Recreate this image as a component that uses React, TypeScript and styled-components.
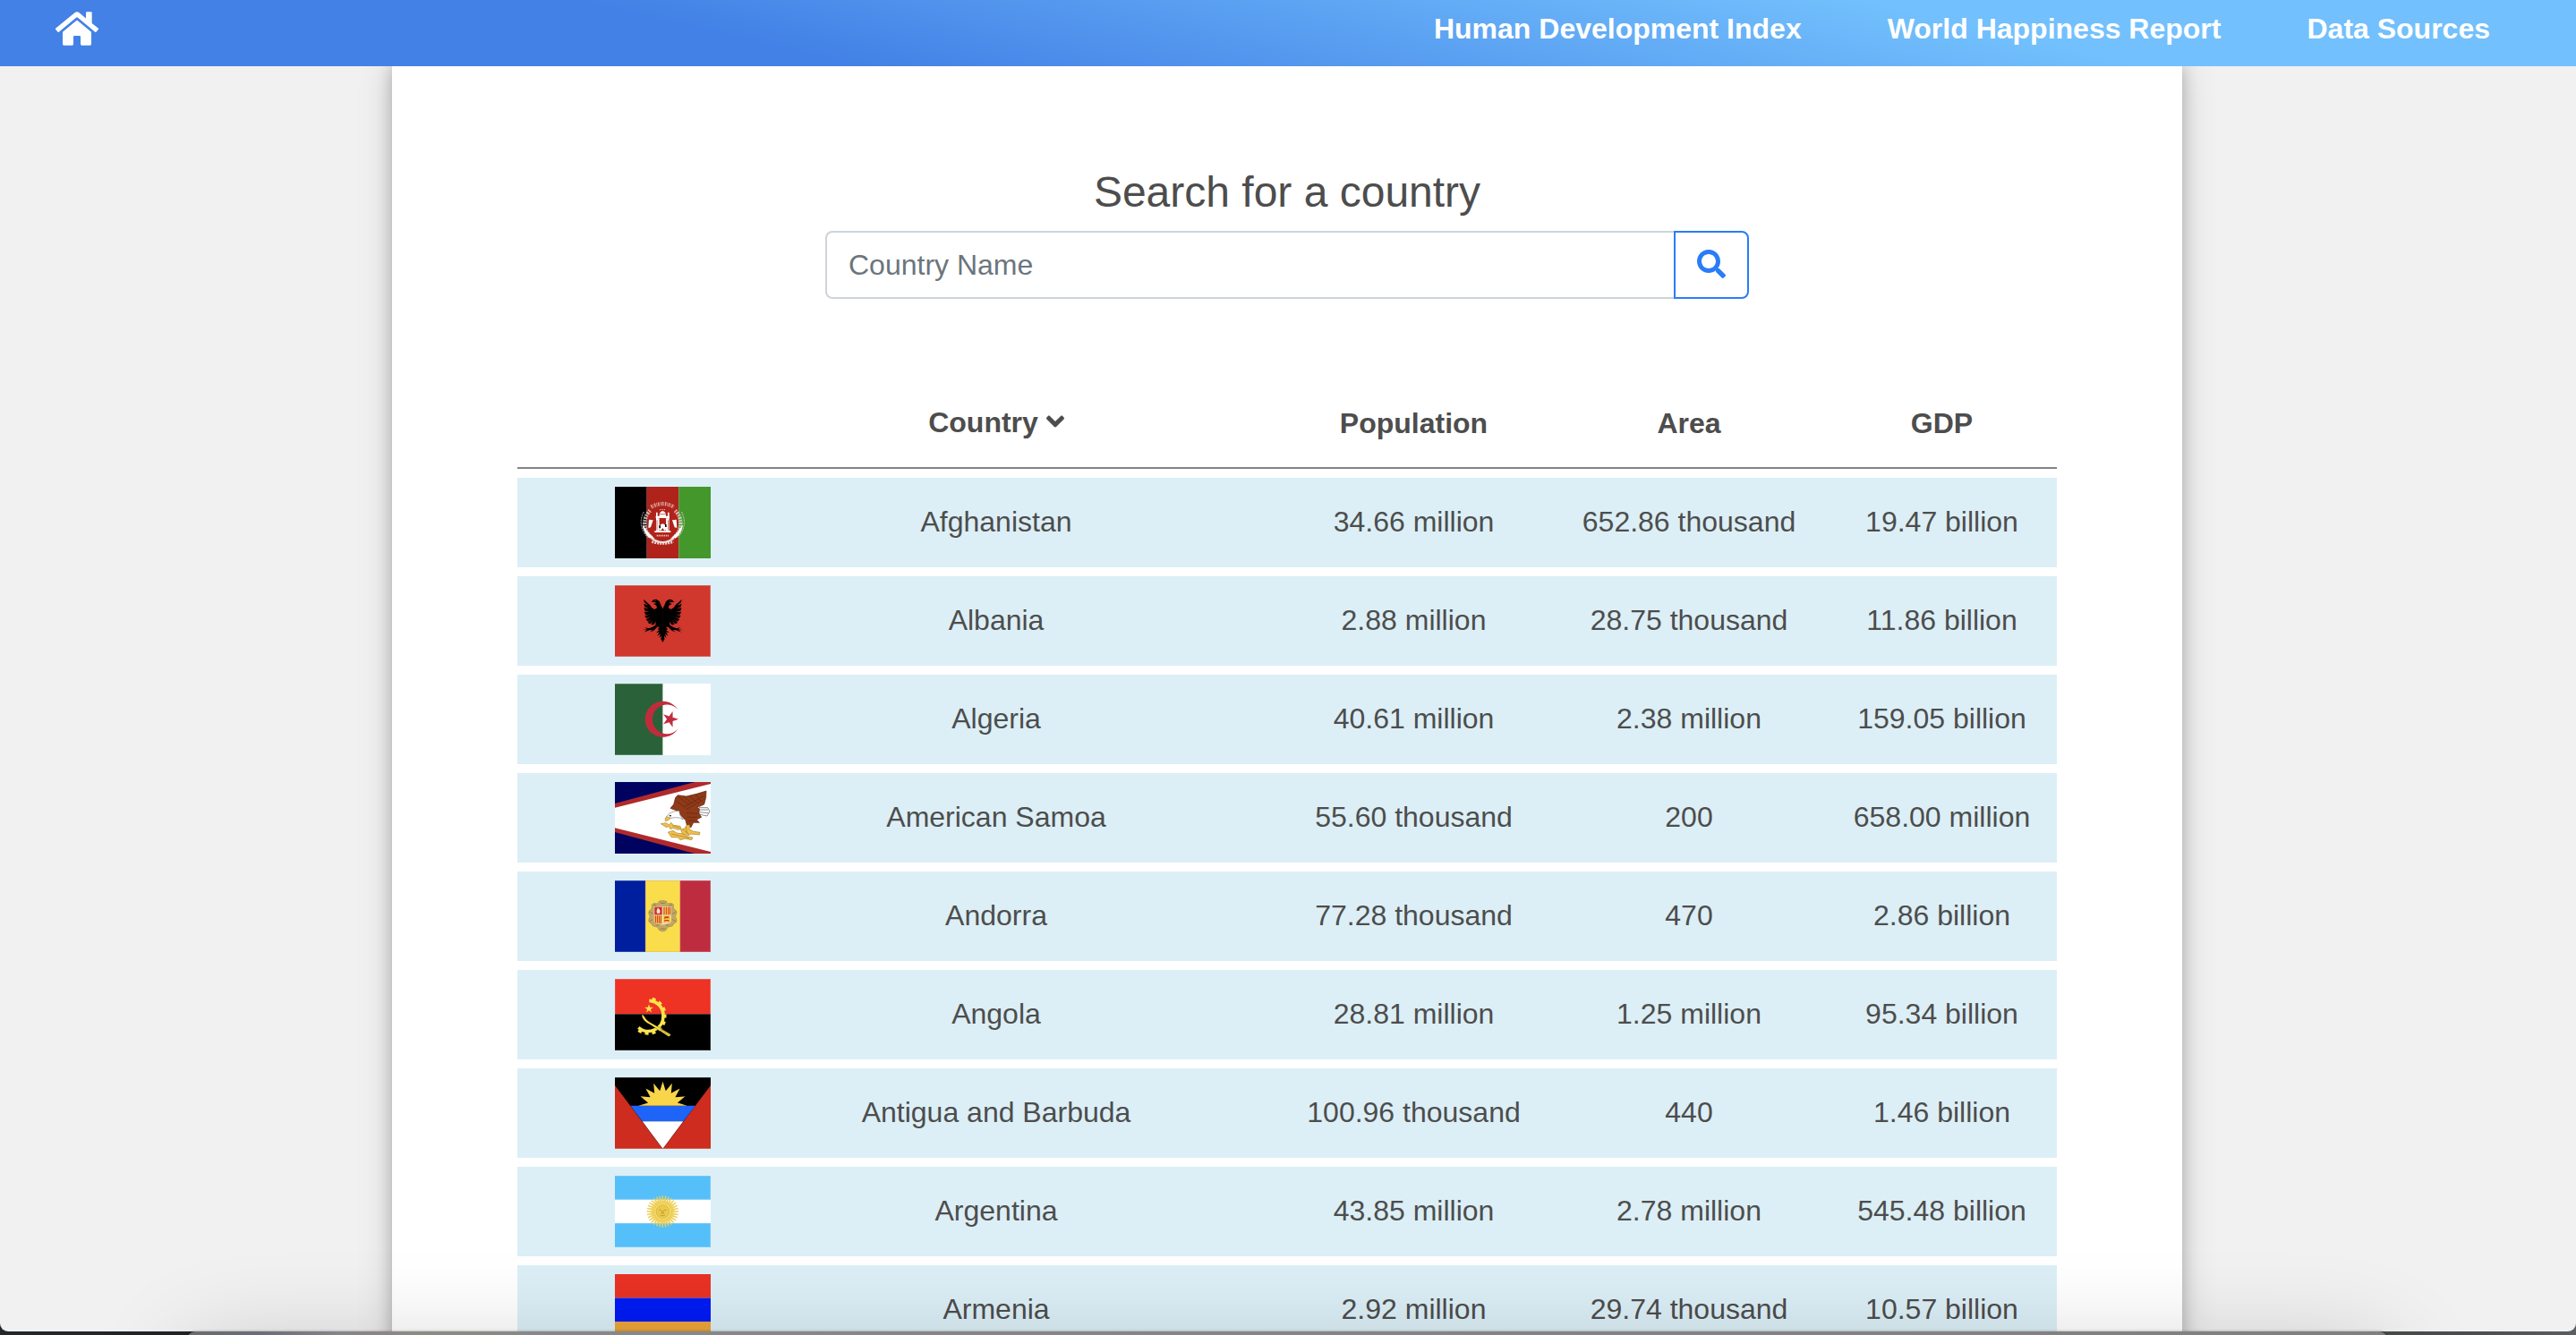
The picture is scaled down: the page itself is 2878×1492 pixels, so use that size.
import React from 'react';
import styled, { createGlobalStyle } from 'styled-components';
import { FaAngleDown, FaHome, FaSearch } from 'react-icons/fa';

const GlobalStyle = createGlobalStyle`
  *, *::before, *::after { box-sizing: border-box; }
  body {
    margin: 0;
    font-family: "Liberation Sans", Helvetica, Arial, sans-serif;
    font-size: 32px;
    line-height: 48px;
    color: #4d4d4d;
    overflow: hidden;
  }
`;

const Desktop = styled.div`
  position: relative;
  height: 1492px;
  overflow: hidden;
  background: linear-gradient(90deg, #24282c 0%, #1f2326 10%, #303336 50%, #4b4e50 96%, #5c5f61 100%);
`;

const BrowserPage = styled.div`
  display: flex;
  flex-direction: column;
  height: 1488px;
  overflow: hidden;
  border-radius: 0 0 9px 9px;
  background: #f1f1f1;
`;

const WindowBehind = styled.div`
  position: absolute;
  left: 209px;
  right: 211px;
  top: 1488px;
  height: 300px;
  border-radius: 9px 9px 0 0;
  background: linear-gradient(90deg, #6a6c6e 0, #6b6e78 80px, #85858a 170px, #8d8588 215px, #8b8d84 260px, #888 400px, #808080 100%);
  box-shadow: 0 0 3px rgba(0, 0, 0, 0.35), 0 20px 110px rgba(0, 0, 0, 0.19);
`;

const NavBar = styled.nav`
  position: relative;
  z-index: 1;
  flex: none;
  display: flex;
  align-items: center;
  justify-content: space-between;
  height: 74px;
  padding: 0 96px 10px 62px;
  color: #fff;
  background: linear-gradient(13deg, #4381e6 30%, #72c0fd 75%);
`;

const HomeLink = styled.a`
  display: flex;
  font-size: 48px;
`;

const NavLinks = styled.div`
  display: flex;
  gap: 96px;
`;

const NavLink = styled.a`
  font-weight: 700;
`;

const Panel = styled.main`
  flex: 1 0 auto;
  width: 2000px;
  margin: 0 440px 0 438px;
  padding: 110px 140px 0;
  background: #fff;
  box-shadow: 0 0 16px rgba(0, 0, 0, 0.22), 0 0 38px rgba(0, 0, 0, 0.16);
`;

const SearchForm = styled.div`
  width: 1032px;
  margin: 0 auto 88px;
`;

const SearchTitle = styled.h4`
  margin: 0 0 14px;
  padding-top: 2px;
  font-size: 48px;
  line-height: 58px;
  font-weight: 400;
  text-align: center;
`;

const InputGroup = styled.div`
  display: flex;
  height: 76px;
`;

const SearchInput = styled.input`
  flex: 1;
  min-width: 0;
  padding: 0 24px;
  border: 2px solid #ced4da;
  border-right: 0;
  border-radius: 8px 0 0 8px;
  background: #fff;
  font: inherit;
  color: inherit;
  &::placeholder {
    color: #6c757d;
    opacity: 1;
  }
`;

const SearchButton = styled.button`
  display: flex;
  align-items: center;
  justify-content: center;
  width: 84px;
  padding: 0 0 3px;
  border: 2px solid #2a7cf7;
  border-radius: 0 8px 8px 0;
  background: transparent;
  color: #2a7cf7;
  font-size: 32px;
`;

const Table = styled.div`
  display: flex;
  flex-direction: column;
  gap: 10px;
`;

const Row = styled.div<{ $head?: boolean }>`
  flex: none;
  display: grid;
  grid-template-columns: 222px 626px 307px 308px 257px;
  align-items: center;
  height: ${(p) => (p.$head ? 102 : 100)}px;
  padding-bottom: ${(p) => (p.$head ? 0 : 2)}px;
  font-weight: ${(p) => (p.$head ? 700 : 400)};
  border-bottom: ${(p) => (p.$head ? '2px solid #838383' : '0')};
  background: ${(p) => (p.$head ? 'transparent' : '#dceff6')};
`;

const Cell = styled.div`
  display: flex;
  align-items: center;
  justify-content: center;
  gap: 9px;
  white-space: nowrap;
`;

const HeadCell = styled(Cell)<{ $sorted?: boolean }>`
  padding-top: ${(p) => (p.$sorted ? 0 : 2)}px;
`;

const SortIcon = styled(FaAngleDown)`
  font-size: 32px;
  width: 20px;
  margin-bottom: 2px;
`;

const FlagCell = styled.div`
  display: flex;
  padding: 2px 0 0 109px;
`;

const FlagSvg = styled.svg`
  display: block;
  width: 107px;
  height: 80px;
`;

const polar = (cx: number, cy: number, r: number, degrees: number) => {
  const a = (degrees * Math.PI) / 180;
  return `${(cx + r * Math.cos(a)).toFixed(2)},${(cy + r * Math.sin(a)).toFixed(2)}`;
};

const starPoints = (cx: number, cy: number, r: number, turn: number, n = 5, inner = 0.382) =>
  Array.from({ length: n * 2 }, (_, i) => polar(cx, cy, i % 2 ? r * inner : r, turn + (i * 180) / n)).join(' ');

const rays = (cx: number, cy: number, from: number, to: number, n: number) =>
  Array.from({ length: n }, (_, i) => `M${polar(cx, cy, from, (i * 360) / n)}L${polar(cx, cy, to, (i * 360) / n)}`).join('');

const Flag = ({ children }: { children: React.ReactNode }) => (
  <FlagSvg viewBox="0 0 321 240" preserveAspectRatio="none">{children}</FlagSvg>
);

const Afghanistan = () => (
  <Flag>
    <rect width="107" height="240" fill="#000" />
    <rect x="107" width="107" height="240" fill="#b0231a" />
    <rect x="214" width="107" height="240" fill="#44972a" />
    <g fill="none" stroke="#efe3e1">
      <path d="M118 80A60 60 0 0 0 122 170M202 80A60 60 0 0 1 198 170" strokeWidth="13" strokeDasharray="5 3 7 3" opacity=".75" />
      <path d="M97 84A70 70 0 0 0 110 170M223 84A70 70 0 0 1 210 170" strokeWidth="3" strokeDasharray="6 3" opacity=".8" />
      <path d="M122 68Q160 46 198 68" strokeWidth="13" strokeDasharray="4 3 2 3" opacity=".75" />
      <path d="M150 77h20" strokeWidth="3" strokeDasharray="4 3" opacity=".8" />
      <path d="M122 172Q160 200 198 172" strokeWidth="6" />
      <path d="M124 184Q160 196 196 184" strokeWidth="9" strokeDasharray="6 3" opacity=".9" />
      <path d="M140 164h40" strokeWidth="5" strokeDasharray="4 2" opacity=".8" />
    </g>
    <g fill="#fff">
      <path d="M149 98Q148 84 160 81Q172 84 171 98H183V105H137V98Z" />
      <path d="M138 86h5v66h-5zM177 86h5v66h-5zM139 106h10v44h-10zM171 106h10v44h-10zM133 148h54v5h-54z" />
      <path d="M114 110l14 2-8 24-8 2zM206 110l-14 2 8 24 8 2z" />
      <path d="M149 144V132Q160 116 171 132V144L166 148 160 138 154 148Z" />
      <path d="M92 128Q104 140 112 154L134 174 114 170Q96 154 92 128ZM228 128Q216 140 208 154L186 174 206 170Q224 154 228 128Z" />
    </g>
    <path d="M148 130h5v9h-5zM168 126h5v9h-5z" fill="#000" />
    <path d="M148 114h24M150 92h20M141 112v34M179 112v34" stroke="#b0231a" strokeWidth="2" />
  </Flag>
);

const EagleHalf = () => (
  <path d="M212 452 206 440 200 426 190 419 180 421 173 429 184 429 191 432 180 434 190 440 192 448 184 453 175 448 168 438 160 431 147 419 150 430 164 440 148 434 151 445 165 451 148 448 152 458 167 461 149 461 154 471 169 470 151 474 156 483 171 478 155 487 162 494 174 485 161 498 170 502 179 490 172 504 181 505 188 494 187 506 174 514 164 517 151 513 160 520 144 522 158 523 149 530 166 523 178 522 167 530 181 524 193 512 201 512 194 520 200 522 189 532 200 529 193 542 204 535 199 548 207 542 205 553 212 564Z" />
);

const Albania = () => (
  <Flag>
    <rect width="321" height="240" fill="#d0372d" />
    <path d="M0 1H320V239H0" fill="none" stroke="#e08e8a" strokeWidth="2" />
    <g transform="translate(-51 -372)">
      <EagleHalf />
      <g transform="translate(422.5 0) scale(-1 1)">
        <EagleHalf />
      </g>
      <path d="M183 424h5M234 424h5" stroke="#d0372d" strokeWidth="2" />
    </g>
  </Flag>
);

const Algeria = () => (
  <Flag>
    <rect width="160" height="240" fill="#2a6138" />
    <rect x="160" width="161" height="240" fill="#fff" />
    <path d="M0 1H160V239H0" fill="none" stroke="#7d9f88" strokeWidth="2" />
    <path d="M212 88A60 60 0 1 0 212 151A49 49 0 1 1 212 88Z" fill="#c12c3d" />
    <polygon points={starPoints(185, 119.5, 28, 0)} fill="#c12c3d" />
  </Flag>
);

const AmericanSamoa = () => (
  <Flag>
    <rect width="321" height="240" fill="#00025f" />
    <path d="M0 72 268 0H321V240H268L0 168Z" fill="#b02a2c" />
    <path d="M0 86 321 6V234L0 154Z" fill="#fff" />
    <g transform="translate(-51 -372)" strokeLinejoin="round">
      <path d="M333 458 362 458 369 470 360 486 333 480Z" fill="#fff" stroke="#555" strokeWidth="2" />
      <path d="M334 465 364 465M334 473 364 476" stroke="#555" strokeWidth="2" />
      <path
        d="M237 460 248 447 254 424 262 416 290 420 324 412 357 402 356 424 350 447 327 457 334 463 332 476 341 490 325 498 334 508 314 508 306 524 292 516 288 500 272 484 262 470 253 466Z"
        fill="#8f3a18"
        stroke="#54210e"
        strokeWidth="2"
      />
      <path
        d="M262 420 300 448M280 422 312 444M300 418 326 441M322 414 338 434M256 436 286 456M284 455 350 418M290 464 346 432M290 476 330 478M292 490 326 490M296 502 318 500"
        stroke="#54210e"
        strokeWidth="1.5"
        fill="none"
      />
      <path d="M266 468 247 471 234 477 224 488 224 495 238 493 254 491 268 492 280 498 270 484Z" fill="#fff" stroke="#555" strokeWidth="1.5" />
      <path d="M233 483h7v4h-7z" fill="#333" />
      <g fill="#f2bf49" stroke="#8d6a1d" strokeWidth="1.5">
        <path d="M224 488 219 495 221 503 230 500 238 493Z" />
        <path d="M205 512 221 509 233 515 240 508 247 517 270 520 274 530 262 532 246 526 237 530 231 520 224 524Z" />
        <path d="M292 516 302 516 300 530 313 537 336 541 334 549 306 546 296 552 278 546 272 533 286 526Z" />
        <path d="M229 540 246 535 258 543 276 545 290 554 312 558 308 566 286 562 270 566 262 558 240 557Z" />
      </g>
      <path d="M240 546 300 560M278 530 300 548M244 518 268 526M290 520 292 545" stroke="#8d6a1d" strokeWidth="1.5" />
    </g>
  </Flag>
);

const Andorra = () => (
  <Flag>
    <rect width="103" height="240" fill="#001f9f" />
    <rect x="103" width="115" height="240" fill="#f9dd4b" />
    <rect x="218" width="103" height="240" fill="#be2d3f" />
    <path d="M0 1H103M0 239H103" stroke="#596cb9" strokeWidth="2" />
    <path d="M103 1H218V239H103Z" fill="none" stroke="#eeb45a" strokeWidth="2" />
    <path d="M219 1H320V239H219" fill="none" stroke="#d56f7b" strokeWidth="2" />
    <g transform="translate(-51 -42)">
      <path
        d="M198 112Q211 107 224 112Q224 122 234 119Q246 117 248 125Q244 132 250 139Q262 144 257 154Q250 162 257 172Q262 182 249 186Q246 197 233 197Q224 196 224 207Q211 218 198 207Q198 196 188 197Q176 197 174 187Q161 182 165 172Q172 162 165 154Q161 144 173 139Q178 132 174 125Q178 117 190 119Q198 122 198 112Z"
        fill="#c2a767"
        stroke="#9c874f"
        strokeWidth="2"
      />
      <path d="M204 118h15M180 122l10 6M242 122l-10 6M169 148l9 6M253 148l-9 6M169 178l9-5M253 178l-9-5M190 193l12-4M232 193l-12-4M204 204h15" stroke="#8f7c48" strokeWidth="3" />
      <path d="M182 129H240V177Q240 188 211 191Q182 188 182 177Z" fill="#ead9a7" />
      <path d="M184 131h25v26h-25z" fill="#d02a32" />
      <path d="M213 131h25v26h-25zM213 160h25v24h-25zM184 160h25v25h-25z" fill="#f6d147" />
      <path d="M216 131v26M223 131v26M230 131v26M236 131v26M187 160v24M193 160v25M199 160v26M205 160v27" stroke="#cf2c2b" strokeWidth="3" />
      <path d="M192 152Q189 142 195 134Q205 140 201 152Z" fill="#fff" />
      <path d="M195 138v13" stroke="#f6d147" strokeWidth="3" />
      <path d="M217 163h15v6h-12v3h-3zM217 174h15v7h-3v-3h-9v3h-3z" fill="#cf3a25" />
    </g>
  </Flag>
);

const Angola = () => (
  <Flag>
    <rect width="321" height="118" fill="#ee3224" />
    <rect y="118" width="321" height="122" fill="#000" />
    <path d="M0 118V1H320V118" fill="none" stroke="#ee7c75" strokeWidth="2" />
    <path d="M0 239H320V118" fill="none" stroke="#555" strokeWidth="2" />
    <g transform="translate(-51 -372)">
      <g fill="none" stroke="#fbe44b">
        <path d="M166 445A49 49 0 0 1 213 496A50 50 0 0 1 130 535" strokeWidth="11" />
        <path d="M176 439A55 55 0 0 1 219 496A56 56 0 0 1 129 544" strokeWidth="9" strokeDasharray="12 12" />
      </g>
      <path d="M141 491Q147 492 150 499Q158 514 175 521Q204 537 238 558L236 564 230 565Q200 545 170 526Q140 511 141 491Z" fill="#fbe44b" stroke="#000" strokeWidth="1" />
      <path d="M203 540 233 561" stroke="#000" strokeWidth="1.8" strokeDasharray="3 2" />
      <polygon points={starPoints(165, 472, 15.5, -90)} fill="#fbe44b" />
    </g>
  </Flag>
);

const Antigua = () => (
  <Flag>
    <rect width="321" height="240" fill="#cd2c1e" />
    <path d="M0 0H321V27L160.5 240 0 27Z" fill="#000" />
    <path d="M52 95H270L229 148H92Z" fill="#1e64f8" />
    <path d="M92 148H229L160.5 239Z" fill="#fff" />
    <svg x="0" y="0" width="321" height="95" viewBox="0 0 321 95">
      <polygon points={starPoints(160.5, 95, 81, -90, 16, 0.62)} fill="#f9d54a" />
    </svg>
    <path d="M0 1H321" stroke="#555" strokeWidth="2" />
    <path d="M0 239H321" stroke="#df7d74" strokeWidth="2" />
  </Flag>
);

const Argentina = () => (
  <Flag>
    <rect width="321" height="240" fill="#fff" />
    <rect width="321" height="80" fill="#55bff9" />
    <rect y="159" width="321" height="81" fill="#55bff9" />
    <path d="M0 1H320V79H0M0 160H320V239H0" fill="none" stroke="#8bd1f8" strokeWidth="2" />
    <path d={rays(160, 120, 24, 53, 32)} stroke="#efcf55" strokeWidth="4.2" />
    <polygon points={starPoints(160, 120, 46, 3, 32, 0.7)} fill="#efcf55" />
    <circle cx="160" cy="120" r="25" fill="#ecca49" stroke="#f7e7a6" strokeWidth="2" />
    <circle cx="160" cy="120" r="22" fill="none" stroke="#cfab3b" strokeWidth="1.5" />
    <path d="M147 115h9M164 115h9M158 117l-2 9h8l-2-9M152 132q8 4 16 0" fill="none" stroke="#a9832e" strokeWidth="1.8" />
  </Flag>
);

const Armenia = () => (
  <Flag>
    <rect width="321" height="80" fill="#e93225" />
    <rect y="80" width="321" height="80" fill="#001bf5" />
    <rect y="159" width="321" height="81" fill="#eba53b" />
    <path d="M0 80H321" stroke="#7a50a8" strokeWidth="2" />
  </Flag>
);

const countries = [
  { flag: Afghanistan, name: 'Afghanistan', population: '34.66 million', area: '652.86 thousand', gdp: '19.47 billion' },
  { flag: Albania, name: 'Albania', population: '2.88 million', area: '28.75 thousand', gdp: '11.86 billion' },
  { flag: Algeria, name: 'Algeria', population: '40.61 million', area: '2.38 million', gdp: '159.05 billion' },
  { flag: AmericanSamoa, name: 'American Samoa', population: '55.60 thousand', area: '200', gdp: '658.00 million' },
  { flag: Andorra, name: 'Andorra', population: '77.28 thousand', area: '470', gdp: '2.86 billion' },
  { flag: Angola, name: 'Angola', population: '28.81 million', area: '1.25 million', gdp: '95.34 billion' },
  { flag: Antigua, name: 'Antigua and Barbuda', population: '100.96 thousand', area: '440', gdp: '1.46 billion' },
  { flag: Argentina, name: 'Argentina', population: '43.85 million', area: '2.78 million', gdp: '545.48 billion' },
  { flag: Armenia, name: 'Armenia', population: '2.92 million', area: '29.74 thousand', gdp: '10.57 billion' },
];

export default function App() {
  return (
    <>
      <GlobalStyle />
      <Desktop>
        <BrowserPage>
          <NavBar>
            <HomeLink aria-label="Home">
              <FaHome />
            </HomeLink>
            <NavLinks>
              <NavLink>Human Development Index</NavLink>
              <NavLink>World Happiness Report</NavLink>
              <NavLink>Data Sources</NavLink>
            </NavLinks>
          </NavBar>
          <Panel>
            <SearchForm>
              <SearchTitle>Search for a country</SearchTitle>
              <InputGroup>
                <SearchInput placeholder="Country Name" />
                <SearchButton aria-label="Search">
                  <FaSearch />
                </SearchButton>
              </InputGroup>
            </SearchForm>
            <Table>
              <Row $head>
                <HeadCell />
                <HeadCell $sorted>
                  Country
                  <SortIcon />
                </HeadCell>
                <HeadCell>Population</HeadCell>
                <HeadCell>Area</HeadCell>
                <HeadCell>GDP</HeadCell>
              </Row>
              {countries.map(({ flag: CountryFlag, name, population, area, gdp }) => (
                <Row key={name}>
                  <FlagCell>
                    <CountryFlag />
                  </FlagCell>
                  <Cell>{name}</Cell>
                  <Cell>{population}</Cell>
                  <Cell>{area}</Cell>
                  <Cell>{gdp}</Cell>
                </Row>
              ))}
            </Table>
          </Panel>
        </BrowserPage>
        <WindowBehind />
      </Desktop>
    </>
  );
}
